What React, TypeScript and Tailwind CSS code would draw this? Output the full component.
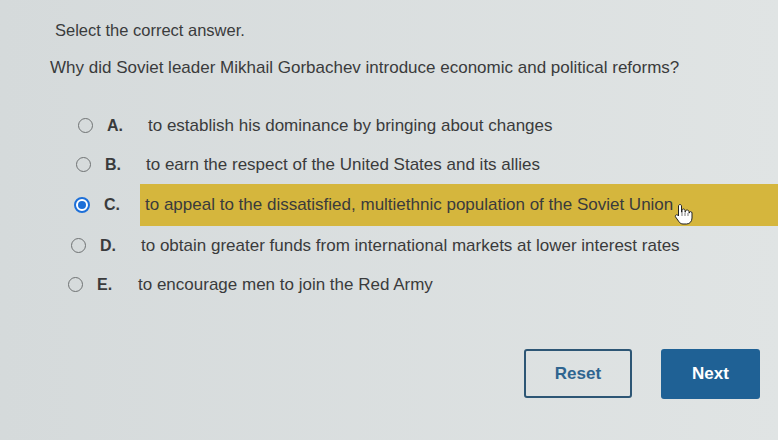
import React, { useState } from "react";

const options = [
    { key: "A", text: "to establish his dominance by bringing about changes", pad: "pl-[78px]" },
    { key: "B", text: "to earn the respect of the United States and its allies", pad: "pl-[76px]" },
    { key: "C", text: "to appeal to the dissatisfied, multiethnic population of the Soviet Union", pad: "pl-[74px]" },
    { key: "D", text: "to obtain greater funds from international markets at lower interest rates", pad: "pl-[71px]" },
    { key: "E", text: "to encourage men to join the Red Army", pad: "pl-[68px]" },
];

const HandCursor: React.FC = () => (
    <svg width="20" height="22" viewBox="0 0 20 22" className="absolute left-[674px] top-[203px]">
        <path
            d="M6 1.5c.8 0 1.5.7 1.5 1.5v6h.5V7.5c0-.8.7-1.5 1.5-1.5s1.5.7 1.5 1.5V9h.5V8.5c0-.8.7-1.5 1.5-1.5S15 7.7 15 8.5V10h.3c0-.8.7-1.4 1.4-1.4.8 0 1.3.6 1.3 1.4v5c0 3.3-2.2 6-5.5 6H9c-1.7 0-3-.8-4-2.2L1.6 14c-.5-.7-.3-1.6.4-2 .6-.4 1.4-.2 1.9.3L4.5 13V3c0-.8.7-1.5 1.5-1.5z"
            fill="white"
            stroke="#222"
            strokeWidth="1"
        />
        <path d="M8 9v4M11 9.5v3.5M14 10v3" stroke="#555" strokeWidth="0.8" />
    </svg>
);

const App: React.FC = () => {
    const [selected, setSelected] = useState("C");

    return (
        <div className="relative w-[778px] h-[440px] overflow-hidden bg-linear-to-r from-[#d5dadb] to-[#e0e4e4] font-['Liberation_Sans',Arial,sans-serif] text-[#3a3b3c]">
            <p className="pt-[20px] pl-[55px] text-[16.5px] leading-[20px]">Select the correct answer.</p>
            <p className="mt-[18px] pl-[50px] text-[17px] leading-[20px]">
                Why did Soviet leader Mikhail Gorbachev introduce economic and political reforms?
            </p>

            <div className="mt-[28px] flex flex-col">
                {options.map(({ key, text, pad }) => {
                    const isSelected = selected === key;
                    return (
                        <div
                            key={key}
                            onClick={() => setSelected(key)}
                            className={`flex items-center cursor-pointer ${pad} ${isSelected ? "h-[42px]" : "h-[39px]"}`}
                        >
                            {isSelected ? (
                                <span className="w-[16px] h-[16px] rounded-full border-2 border-[#1d6fd8] bg-white flex items-center justify-center shrink-0">
                                    <span className="w-[8px] h-[8px] rounded-full bg-[#1d6fd8]" />
                                </span>
                            ) : (
                                <span className="w-[15px] h-[15px] rounded-full border-[1.5px] border-[#6f7273] shrink-0" />
                            )}
                            <span className="ml-[14px] w-[41px] text-[16px] font-bold">{key}.</span>
                            <span
                                className={`h-full flex items-center text-[17px] ${
                                    isSelected ? "flex-1 bg-[#d5b63d] pl-[5px] -ml-[5px]" : ""
                                }`}
                            >
                                {text}
                            </span>
                        </div>
                    );
                })}
            </div>

            <div className="mt-[45px] flex justify-end gap-[29px] pr-[18px]">
                <button className="w-[108px] h-[49px] border-2 border-[#2d5675] rounded-[3px] text-[#2f6590] text-[17px] font-bold">
                    Reset
                </button>
                <button className="w-[99px] h-[50px] rounded-[3px] bg-[#1f6195] text-white text-[17px] font-bold">
                    Next
                </button>
            </div>

            <HandCursor />
        </div>
    );
};

export default App;
